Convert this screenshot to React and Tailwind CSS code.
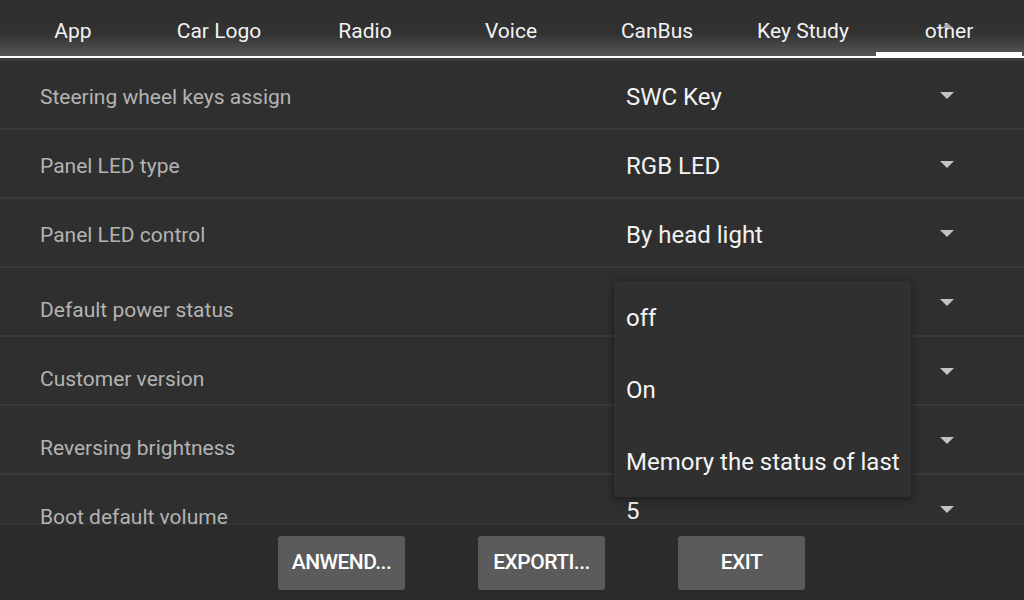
import React from 'react';

const tabs = ['App', 'Car Logo', 'Radio', 'Voice', 'CanBus', 'Key Study', 'other'];

// values of rows under the open dropdown are hidden, so left blank
const rows = [
  { label: 'Steering wheel keys assign', value: 'SWC Key' },
  { label: 'Panel LED type', value: 'RGB LED' },
  { label: 'Panel LED control', value: 'By head light' },
  { label: 'Default power status', value: '', low: true },
  { label: 'Customer version', value: '', low: true },
  { label: 'Reversing brightness', value: '', low: true },
  { label: 'Boot default volume', value: '5', low: true },
];

const options = ['off', 'On', 'Memory the status of last'];

const Caret = () => (
  <svg width="14" height="8" viewBox="0 0 14 8" className="shrink-0">
    <path d="M0 0 H14 L7 7 Z" fill="#c2c2c2" />
  </svg>
);

const App = () => {
  return (
    <div
      className="relative w-[1024px] h-[600px] overflow-hidden bg-[#2f2f2f] flex flex-col"
      style={{ fontFamily: 'Roboto, "Noto Sans", sans-serif' }}
    >
      {/* Tab strip */}
      <div className="h-[58px] shrink-0 flex bg-gradient-to-b from-[#2e2e2e] via-[#323232] via-60% to-[#575757] border-b-2 border-white pr-[2px]">
        {tabs.map((tab, i) => (
          <div key={tab} className="relative w-[146px] flex items-center justify-center pt-[8px] text-[21px] text-[#f2f2f2]">
            {tab}
            {i === tabs.length - 1 && (
              <>
                <div className="absolute left-0 right-0 bottom-0 h-[4px] bg-white" />
                <svg width="11" height="5" viewBox="0 0 11 5" className="absolute left-[66px] top-[23px]">
                  <path d="M0 5 L5.5 0 L11 5 Z" fill="#a8a8a8" />
                </svg>
              </>
            )}
          </div>
        ))}
      </div>
      <div className="h-[3px] shrink-0 bg-[#3a3a3a]" />

      {/* Settings list */}
      <div className="flex-1 overflow-hidden">
        {rows.map((row) => (
          <div key={row.label} className="h-[69px] flex items-center border-b-2 border-[#3a3a3a]">
            <div className={`w-[626px] pl-[40px] text-[21px] text-[#b3b3b3] ${row.low ? 'pt-[19px]' : 'pt-[6px]'}`}>
              {row.label}
            </div>
            <div className="flex-1 text-[24px] text-[#f2f2f2] pt-[4px]">{row.value}</div>
            <div className="w-[84px] pt-[2px]">
              <Caret />
            </div>
          </div>
        ))}
      </div>

      {/* Bottom buttons */}
      <div className="h-[76px] shrink-0 bg-[#2b2b2b] border-t border-[#363636] flex items-center pl-[278px] gap-[73px]">
        {['ANWEND...', 'EXPORTI...', 'EXIT'].map((b) => (
          <button
            key={b}
            className="w-[127px] h-[54px] rounded-[3px] bg-[#5b5b5c] text-white text-[21px] font-medium tracking-tight"
          >
            {b}
          </button>
        ))}
      </div>

      {/* Open dropdown */}
      <div className="absolute left-[614px] top-[281px] w-[297px] h-[216px] bg-[#303030] rounded-[3px] shadow-[0_2px_8px_rgba(0,0,0,0.45)] flex flex-col">
        {options.map((o) => (
          <div key={o} className="h-[72px] flex items-center pl-[12px] pt-[2px] text-[24px] text-[#f4f4f4]">
            {o}
          </div>
        ))}
      </div>
    </div>
  );
};

export default App;
